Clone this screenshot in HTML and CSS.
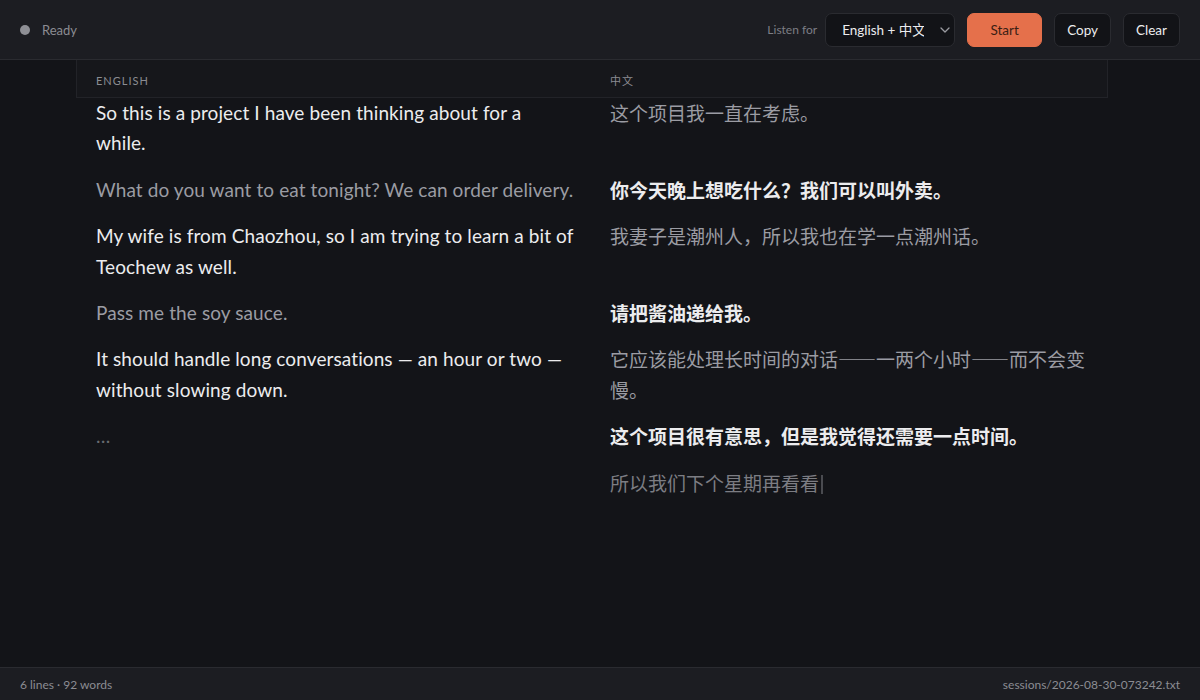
FILE: index.html
```html
<!DOCTYPE html>
<html lang="en">

<head>
  <meta charset="UTF-8">
  <meta name="viewport" content="width=device-width, initial-scale=1.0">
  <title>Live Transcript</title>
  <link rel="stylesheet" href="styles.css">
</head>

<body>

  <header class="topbar">
    <div class="status">
      <span class="status-dot"></span>
      <span class="status-text">Ready</span>
    </div>
    <div class="controls">
      <label class="listen-label" for="lang">Listen for</label>
      <div class="select-wrap">
        <select id="lang" class="lang-select">
          <option>English + 中文</option>
          <option>English</option>
          <option>中文</option>
        </select>
        <svg class="chevron" width="10" height="6" viewBox="0 0 10 6">
          <path d="M1 1l4 4 4-4" fill="none" stroke="currentColor" stroke-width="1.3" stroke-linecap="round" stroke-linejoin="round"/>
        </svg>
      </div>
      <button class="btn btn-start">Start</button>
      <button class="btn">Copy</button>
      <button class="btn">Clear</button>
    </div>
  </header>

  <main class="transcript">
    <div class="sheet">
      <div class="col-heads">
        <div class="col-head">English</div>
        <div class="col-head" lang="zh-CN">中文</div>
      </div>

      <div class="row">
        <p class="en source">So this is a project I have been thinking about for a while.</p>
        <p class="zh" lang="zh-CN">这个项目我一直在考虑。</p>
      </div>
      <div class="row">
        <p class="en">What do you want to eat tonight? We can order delivery.</p>
        <p class="zh source" lang="zh-CN">你今天晚上想吃什么？我们可以叫外卖。</p>
      </div>
      <div class="row">
        <p class="en source">My wife is from Chaozhou, so I am trying to learn a bit of Teochew as well.</p>
        <p class="zh" lang="zh-CN">我妻子是潮州人，所以我也在学一点潮州话。</p>
      </div>
      <div class="row">
        <p class="en">Pass me the soy sauce.</p>
        <p class="zh source" lang="zh-CN">请把酱油递给我。</p>
      </div>
      <div class="row">
        <p class="en source">It should handle long conversations — an hour or two — without slowing down.</p>
        <p class="zh" lang="zh-CN">它应该能处理长时间的对话——一两个小时——而不会变慢。</p>
      </div>
      <div class="row">
        <p class="en pending">…</p>
        <p class="zh source" lang="zh-CN">这个项目很有意思，但是我觉得还需要一点时间。</p>
      </div>
      <div class="row">
        <p class="en"></p>
        <p class="zh interim" lang="zh-CN">所以我们下个星期再看看<span class="caret"></span></p>
      </div>
    </div>
  </main>

  <footer class="statusbar">
    <span>6 lines · 92 words</span>
    <span>sessions/2026-08-30-073242.txt</span>
  </footer>

</body>

</html>
```

FILE: styles.css
```css
* {
  box-sizing: border-box;
}

html,
body {
  height: 100%;
}

body {
  margin: 0;
  display: flex;
  flex-direction: column;
  font-family: Lato, "Noto Sans CJK SC", sans-serif;
  background-color: #131418;
  color: #ececee;
}

/* Top bar */
.topbar {
  height: 60px;
  flex-shrink: 0;
  display: flex;
  align-items: center;
  justify-content: space-between;
  padding: 0 20px;
  background-color: #1c1d22;
  border-bottom: 1px solid #2a2b30;
}

.status {
  display: flex;
  align-items: center;
  gap: 12px;
}

.status-dot {
  width: 10px;
  height: 10px;
  border-radius: 50%;
  background-color: #8e8f95;
}

.status-text {
  font-size: 13px;
  color: #8b8c92;
}

.controls {
  display: flex;
  align-items: center;
  gap: 12px;
}

.listen-label {
  font-size: 12px;
  color: #7d7e85;
  margin-right: -4px;
}

.select-wrap {
  position: relative;
}

.lang-select {
  appearance: none;
  height: 34px;
  width: 130px;
  padding: 0 30px 0 16px;
  font-family: inherit;
  font-size: 13.5px;
  color: #ececee;
  background-color: #121317;
  border: 1px solid #2a2b30;
  border-radius: 7px;
}

.chevron {
  position: absolute;
  right: 5px;
  top: 14px;
  color: #9a9ba1;
  pointer-events: none;
}

.btn {
  height: 34px;
  padding: 0 12px;
  font-family: inherit;
  font-size: 13.5px;
  color: #ececee;
  background-color: #121317;
  border: 1px solid #2a2b30;
  border-radius: 7px;
  cursor: pointer;
}

.btn-start {
  width: 75px;
  background-color: #e5704b;
  border-color: #e5704b;
  color: #3a1e14;
}

/* Transcript */
.transcript {
  flex: 1;
  overflow: hidden;
  padding-right: 16px;
}

.sheet {
  max-width: 1032px;
  margin: 0 auto;
}

.col-heads {
  display: grid;
  grid-template-columns: 478px 478px;
  column-gap: 36px;
  padding: 14px 19px 10px;
  background-color: #16171b;
  border: 1px solid #222328;
  border-top: none;
}

.col-head {
  font-size: 11px;
  line-height: 13px;
  letter-spacing: 1px;
  text-transform: uppercase;
  color: #8b8c92;
}

.row {
  display: grid;
  grid-template-columns: 478px 478px;
  column-gap: 36px;
  padding: 0 20px;
  margin-bottom: 16px;
}

.row p {
  margin: 0;
  font-size: 19px;
  line-height: 1.6;
  color: #9b9ca3;
}

.row .en {
  letter-spacing: 0.1px;
}

.row .zh {
  font-family: "Noto Sans CJK SC", sans-serif;
}

.row .source {
  color: #ececee;
}

.row .zh.source {
  font-weight: 700;
}

.row .pending {
  color: #6a6b70;
}

.row .interim {
  color: #7c7d83;
}

.caret {
  display: inline-block;
  width: 2px;
  height: 19px;
  margin-left: 2px;
  vertical-align: -3px;
  background-color: #4a4b50;
}

/* Bottom bar */
.statusbar {
  height: 33px;
  flex-shrink: 0;
  display: flex;
  align-items: center;
  justify-content: space-between;
  padding: 0 20px;
  font-size: 12px;
  color: #8b8c92;
  background-color: #1c1d22;
  border-top: 1px solid #2a2b30;
}
```
